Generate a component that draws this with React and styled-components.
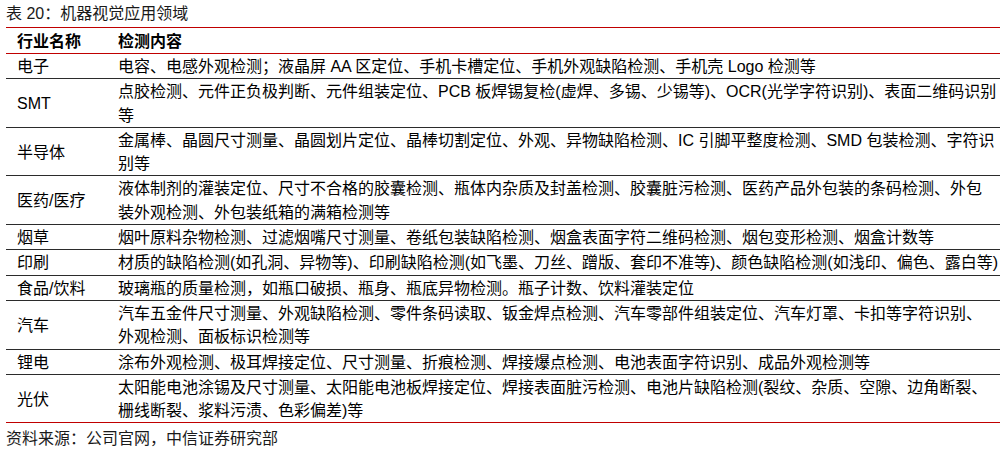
import React from "react";
import styled, { createGlobalStyle } from "styled-components";

const GlobalStyle = createGlobalStyle`
body{
  margin:0;
  background:#fff;
  font-family:"Liberation Sans","Noto Sans CJK SC",sans-serif;
  color:#000;
}
`;

const Page = styled.div`
width:994px;
padding:4px 5px 0 6px;
`;

const Caption = styled.div`
font-size:16px;
line-height:20px;
height:23px;
color:#1a1a1a;
`;

const Table = styled.div`
display:grid;
grid-template-columns:112px 1fr;
border-top:1.5px solid #c00000;
border-bottom:1.5px solid #c00000;
`;

const HeadCell = styled.div`
font-size:16px;
font-weight:bold;
line-height:23px;
padding:2px 0 0 ${(p) => (p.$first ? "11px" : "0")};
border-bottom:1.5px solid #c00000;
`;

const NameCell = styled.div`
display:flex;
align-items:center;
font-size:16px;
line-height:23.3px;
padding:1px 0 0 11px;
border-bottom:${(p) => (p.$last ? "none" : "1px solid #2b2b2b")};
`;

/* lines are broken where the source table breaks them */
const TextCell = styled.div`
font-size:16px;
line-height:23.3px;
padding:1px 0 0;
white-space:pre-line;
overflow:hidden;
border-bottom:${(p) => (p.$last ? "none" : "1px solid #2b2b2b")};
`;

const Source = styled.div`
font-size:16px;
line-height:20px;
padding-top:6px;
color:#1a1a1a;
`;

const rows = [
  ["电子", "电容、电感外观检测；液晶屏 AA 区定位、手机卡槽定位、手机外观缺陷检测、手机壳 Logo 检测等"],
  ["SMT", "点胶检测、元件正负极判断、元件组装定位、PCB 板焊锡复检(虚焊、多锡、少锡等)、OCR(光学字符识别)、表面二维码识别\n等"],
  ["半导体", "金属棒、晶圆尺寸测量、晶圆划片定位、晶棒切割定位、外观、异物缺陷检测、IC 引脚平整度检测、SMD 包装检测、字符识\n别等"],
  ["医药/医疗", "液体制剂的灌装定位、尺寸不合格的胶囊检测、瓶体内杂质及封盖检测、胶囊脏污检测、医药产品外包装的条码检测、外包\n装外观检测、外包装纸箱的满箱检测等"],
  ["烟草", "烟叶原料杂物检测、过滤烟嘴尺寸测量、卷纸包装缺陷检测、烟盒表面字符二维码检测、烟包变形检测、烟盒计数等"],
  ["印刷", "材质的缺陷检测(如孔洞、异物等)、印刷缺陷检测(如飞墨、刀丝、蹭版、套印不准等)、颜色缺陷检测(如浅印、偏色、露白等)"],
  ["食品/饮料", "玻璃瓶的质量检测，如瓶口破损、瓶身、瓶底异物检测。瓶子计数、饮料灌装定位"],
  ["汽车", "汽车五金件尺寸测量、外观缺陷检测、零件条码读取、钣金焊点检测、汽车零部件组装定位、汽车灯罩、卡扣等字符识别、\n外观检测、面板标识检测等"],
  ["锂电", "涂布外观检测、极耳焊接定位、尺寸测量、折痕检测、焊接爆点检测、电池表面字符识别、成品外观检测等"],
  ["光伏", "太阳能电池涂锡及尺寸测量、太阳能电池板焊接定位、焊接表面脏污检测、电池片缺陷检测(裂纹、杂质、空隙、边角断裂、\n栅线断裂、浆料污渍、色彩偏差)等"],
];

const App = () => {
  return (
    <Page>
      <GlobalStyle />
      <Caption>表 20：机器视觉应用领域</Caption>
      <Table>
        <HeadCell $first>行业名称</HeadCell>
        <HeadCell>检测内容</HeadCell>
        {rows.map(([name, text], i) => (
          <React.Fragment key={name}>
            <NameCell $last={i === rows.length - 1}>{name}</NameCell>
            <TextCell $last={i === rows.length - 1}>{text}</TextCell>
          </React.Fragment>
        ))}
      </Table>
      <Source>资料来源：公司官网，中信证券研究部</Source>
    </Page>
  );
};

export default App;
